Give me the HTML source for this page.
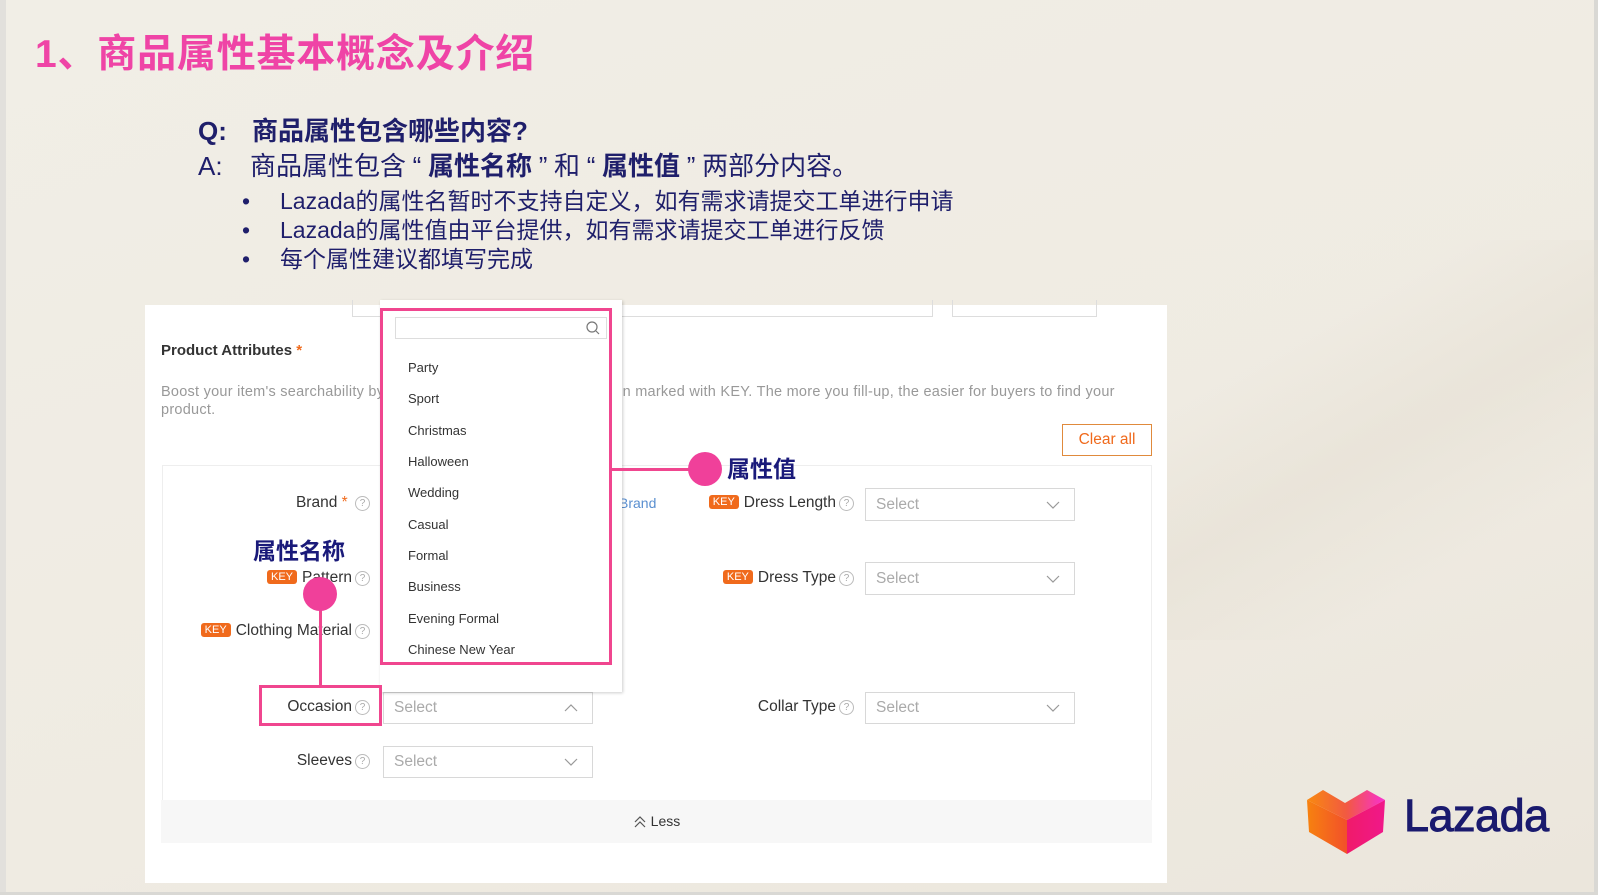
<!DOCTYPE html>
<html><head><meta charset="utf-8"><style>
*{margin:0;padding:0;box-sizing:border-box}
body{width:1598px;height:895px;background:#d9d8d4;position:relative;overflow:hidden;font-family:"Liberation Sans","Noto Sans CJK SC",sans-serif}
.a{position:absolute}
#slide{left:0;top:0;width:1594px;height:892px;background:linear-gradient(160deg,#f1eee6 0%,#efebe2 60%,#ebe6dc 100%)}
.cn{font-family:"Liberation Sans","Noto Sans CJK SC",sans-serif}
.navy{color:#1f1f6b}
.lbl{font-size:15.5px;color:#333;white-space:nowrap}
.q{display:inline-block;width:15px;height:15px;border:1px solid #bbb;border-radius:50%;font-size:10px;color:#aaa;text-align:center;line-height:13px;vertical-align:1px;margin-left:3px}
.key{display:inline-block;background:#f06a1c;color:#fff;font-size:11px;padding:1px 4px;border-radius:3px;vertical-align:2px;margin-right:5px}
.sel{border:1px solid #d8d8d8;background:#fff;color:#aaa;font-size:15.5px;padding-left:10px}
.sel svg{position:absolute;right:14px;top:50%;margin-top:-4px}
.item{position:absolute;left:408px;font-size:13px;color:#333}
.qt{display:inline-block;width:22px;text-align:center}
</style></head><body>
<div id="slide" class="a"></div>
<div class="a" style="left:0;top:0;width:6px;height:892px;background:#e2e0dc"></div>
<div class="a" style="left:900px;top:240px;width:700px;height:400px;background:linear-gradient(150deg,rgba(255,255,255,0) 40%,rgba(230,224,212,.6) 60%,rgba(255,255,255,0) 80%)"></div>

<div class="a cn" style="left:35px;top:23px;font-size:39px;font-weight:bold;color:#ef44a6;letter-spacing:0.8px">1、商品属性基本概念及介绍</div>
<div class="a cn navy" style="left:198px;top:111px;font-size:26px;font-weight:bold"><span style="display:inline-block;width:54px">Q:</span>商品属性包含哪些内容?</div>
<div class="a cn navy" style="left:198px;top:146px;font-size:26px;white-space:nowrap"><span style="display:inline-block;width:52px">A:</span>商品属性包含<span class="qt">“</span><b>属性名称</b><span class="qt">”</span>和<span class="qt">“</span><b>属性值</b><span class="qt">”</span>两部分内容。</div>
<div class="a cn navy" style="left:242px;top:187px;font-size:23px;line-height:29px;white-space:nowrap">
<div><span style="display:inline-block;width:38px">•</span>Lazada的属性名暂时不支持自定义，如有需求请提交工单进行申请</div>
<div><span style="display:inline-block;width:38px">•</span>Lazada的属性值由平台提供，如有需求请提交工单进行反馈</div>
<div><span style="display:inline-block;width:38px">•</span>每个属性建议都填写完成</div>
</div>

<!-- card -->
<div class="a" style="left:145px;top:305px;width:1022px;height:578px;background:#fff"></div>
<div class="a" style="left:352px;top:300px;width:581px;height:17px;border:1px solid #ddd;border-top:none"></div>
<div class="a" style="left:952px;top:300px;width:145px;height:17px;border:1px solid #ddd;border-top:none"></div>
<div class="a" style="left:161px;top:342px;font-size:15px;font-weight:bold;color:#333">Product Attributes <span style="color:#f06a1c">*</span></div>
<div class="a" style="left:161px;top:383px;font-size:14.5px;color:#999;line-height:18px;width:1000px;letter-spacing:0.25px">Boost your item's searchability by filling-up the key product information marked with KEY. The more you fill-up, the easier for buyers to find your product.</div>
<div class="a" style="left:1062px;top:424px;width:90px;height:32px;border:1px solid #e08a3c;color:#f06a1c;font-size:15.5px;text-align:center;line-height:30px">Clear all</div>
<div class="a" style="left:162px;top:465px;width:990px;height:336px;border:1px solid #eee;border-bottom:none"></div>
<div class="a" style="left:161px;top:800px;width:991px;height:43px;background:#f7f7f7;font-size:14px;color:#333;text-align:center;line-height:43px">
<svg width="14" height="14" viewBox="0 0 14 14" style="vertical-align:-2px"><path d="M2 8l5-5 5 5M2 13l5-5 5 5" fill="none" stroke="#555" stroke-width="1.2"/></svg> Less</div>

<!-- labels left -->
<div class="a lbl" style="right:1228px;top:494px">Brand <span style="color:#f06a1c">*</span> <span class="q">?</span></div>
<div class="a lbl" style="left:619px;top:495px;color:#5a8fd0;font-size:14px">Brand</div>
<div class="a lbl" style="right:1228px;top:569px"><span class="key">KEY</span>Pattern<span class="q">?</span></div>
<div class="a lbl" style="right:1228px;top:622px"><span class="key">KEY</span>Clothing Material<span class="q">?</span></div>
<div class="a lbl" style="right:1228px;top:698px">Occasion<span class="q">?</span></div>
<div class="a lbl" style="right:1228px;top:752px">Sleeves<span class="q">?</span></div>

<div class="a lbl" style="right:744px;top:494px"><span class="key">KEY</span>Dress Length<span class="q">?</span></div>
<div class="a lbl" style="right:744px;top:569px"><span class="key">KEY</span>Dress Type<span class="q">?</span></div>
<div class="a lbl" style="right:744px;top:698px">Collar Type<span class="q">?</span></div>

<div class="a sel" style="left:865px;top:488px;width:210px;height:33px;line-height:31px">Select<svg width="14" height="8"><path d="M1 1l6 6 6-6" fill="none" stroke="#999" stroke-width="1.2"/></svg></div>
<div class="a sel" style="left:865px;top:562px;width:210px;height:33px;line-height:31px">Select<svg width="14" height="8"><path d="M1 1l6 6 6-6" fill="none" stroke="#999" stroke-width="1.2"/></svg></div>
<div class="a sel" style="left:865px;top:692px;width:210px;height:32px;line-height:30px">Select<svg width="14" height="8"><path d="M1 1l6 6 6-6" fill="none" stroke="#999" stroke-width="1.2"/></svg></div>
<div class="a sel" style="left:383px;top:692px;width:210px;height:32px;line-height:30px">Select<svg width="14" height="8"><path d="M1 7l6-6 6 6" fill="none" stroke="#999" stroke-width="1.2"/></svg></div>
<div class="a sel" style="left:383px;top:746px;width:210px;height:32px;line-height:30px">Select<svg width="14" height="8"><path d="M1 1l6 6 6-6" fill="none" stroke="#999" stroke-width="1.2"/></svg></div>

<!-- dropdown -->
<div class="a" style="left:380px;top:300px;width:242px;height:392px;background:#fff;box-shadow:1px 1px 3px rgba(0,0,0,.2)"></div>
<div class="a" style="left:395px;top:317px;width:212px;height:22px;border:1px solid #ddd"><svg class="a" style="right:6px;top:3px" width="14" height="14"><circle cx="6" cy="6" r="5" fill="none" stroke="#777" stroke-width="1.2"/><path d="M10 10l3 3" stroke="#777" stroke-width="1.2"/></svg></div>
<div class="item" style="top:360px">Party</div>
<div class="item" style="top:391px">Sport</div>
<div class="item" style="top:423px">Christmas</div>
<div class="item" style="top:454px">Halloween</div>
<div class="item" style="top:485px">Wedding</div>
<div class="item" style="top:517px">Casual</div>
<div class="item" style="top:548px">Formal</div>
<div class="item" style="top:579px">Business</div>
<div class="item" style="top:611px">Evening Formal</div>
<div class="item" style="top:642px">Chinese New Year</div>
<div class="a" style="left:380px;top:308px;width:232px;height:357px;border:3px solid #f0468f"></div>

<!-- annotations -->
<div class="a" style="left:612px;top:468px;width:93px;height:3px;background:#f0468f"></div>
<div class="a" style="left:688px;top:452px;width:34px;height:34px;border-radius:50%;background:#f0409a"></div>
<div class="a cn navy" style="left:727px;top:450px;font-size:23px;font-weight:bold;color:#1a1a7a">属性值</div>
<div class="a cn navy" style="left:253px;top:532px;font-size:23px;font-weight:bold;color:#1a1a7a">属性名称</div>
<div class="a" style="left:319px;top:594px;width:3px;height:92px;background:#f0468f"></div>
<div class="a" style="left:303px;top:577px;width:34px;height:34px;border-radius:50%;background:#f0409a"></div>
<div class="a" style="left:259px;top:685px;width:123px;height:41px;border:3px solid #f0468f"></div>

<!-- logo -->
<svg class="a" style="left:1305px;top:788px" width="84" height="68" viewBox="0 0 84 68">
<defs><linearGradient id="g1" x1="0" x2="1"><stop offset="0" stop-color="#f7820f"/><stop offset="1" stop-color="#f2502a"/></linearGradient>
<linearGradient id="g2" x1="0" x2="1"><stop offset="0" stop-color="#f01a6a"/><stop offset="1" stop-color="#f0188a"/></linearGradient>
<linearGradient id="g3" x1="0" x2="1"><stop offset="0" stop-color="#f88a10"/><stop offset=".5" stop-color="#f25a40"/><stop offset="1" stop-color="#f830d0"/></linearGradient></defs>
<path d="M2 12L18 2 40 15 62 2 80 12 42 32Z" fill="url(#g3)"/>
<path d="M2 12L42 32 42 66 4 44Z" fill="url(#g1)"/>
<path d="M42 32L80 12 78 44 42 66Z" fill="url(#g2)"/>
</svg>
<div class="a" style="left:1404px;top:790px;font-size:45px;color:#1a1a6e;font-family:'Liberation Sans',sans-serif;letter-spacing:-0.5px;-webkit-text-stroke:1px #1a1a6e">Lazada</div>
</body></html>
